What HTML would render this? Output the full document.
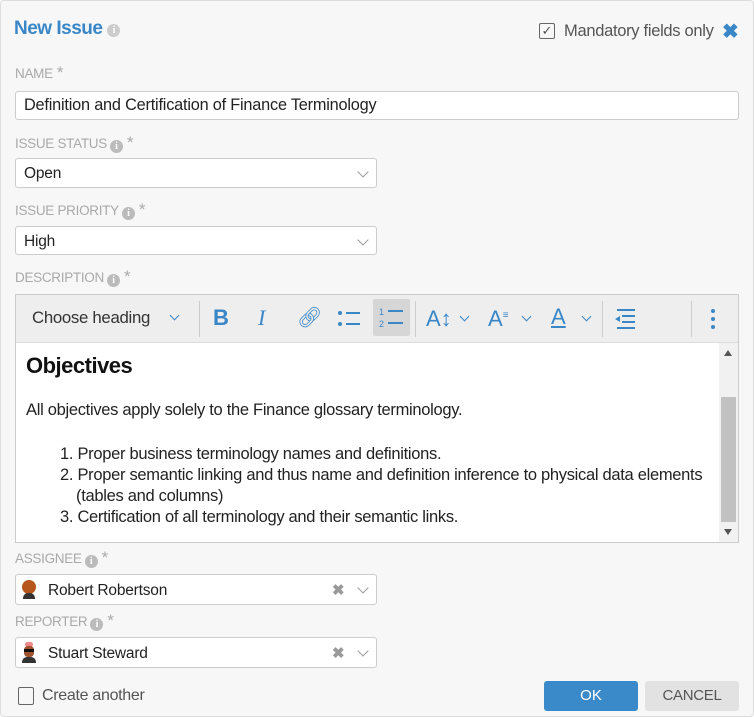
<!DOCTYPE html>
<html><head><meta charset="utf-8"><style>
*{box-sizing:border-box;margin:0;padding:0}
body{width:754px;height:717px;background:#fff;font-family:"Liberation Sans",sans-serif;position:relative;overflow:hidden;color:#222}
.dlg{position:absolute;left:0;top:0;width:754px;height:717px;background:#f7f7f7;box-shadow:inset 0 0 0 1px #ddd;border-radius:4px}
.a{position:absolute}
.lbl{position:absolute;left:15px;font-size:13.5px;color:#a9a9a9;letter-spacing:-0.3px}
.lbl .i{display:inline-block;width:13px;height:13px;border-radius:50%;background:#bbb;color:#fff;font-size:10px;font-weight:bold;text-align:center;line-height:13px;vertical-align:-1px;margin-left:3px;font-family:"Liberation Serif",serif}
.lbl .s{font-size:17px;color:#aaa;margin-left:4px}
.inp{position:absolute;left:15px;background:#fff;border:1px solid #ccc;border-radius:3px;font-size:15.5px;padding-left:8px;letter-spacing:-0.2px}
.chev{position:absolute;right:9px;top:9px;width:8px;height:8px;border-right:1.4px solid #999;border-bottom:1.4px solid #999;transform:rotate(45deg)}
.x{position:absolute;color:#999;font-size:15px;font-weight:bold}
.tb{color:#3a87c8}
.sep{position:absolute;top:6px;width:1px;height:36px;background:#ccc}
</style></head><body>
<div class="dlg">
<div class="a" style="left:14px;top:18px;font-size:19px;font-weight:bold;color:#3a87c8;letter-spacing:-0.5px">New Issue <span style="display:inline-block;width:13px;height:13px;border-radius:50%;background:#ccc;color:#fff;font-size:10px;text-align:center;line-height:13px;vertical-align:1px;font-family:'Liberation Serif',serif">i</span></div>
<div class="a" style="left:539px;top:23px;width:16px;height:16px;border:1.5px solid #666;border-radius:2px;font-size:13px;line-height:13px;text-align:center;color:#555">✓</div>
<div class="a" style="left:564px;top:22px;font-size:16.5px;color:#555;letter-spacing:-0.3px">Mandatory fields only</div>
<div class="a" style="left:722px;top:19px;font-size:20px;font-weight:bold;color:#3a87c8">✖</div>

<div class="lbl" style="top:63px">NAME<span class="s">*</span></div>
<div class="inp" style="top:91px;width:724px;height:29px;line-height:27px;font-size:16.3px">Definition and Certification of Finance Terminology</div>

<div class="lbl" style="top:133px">ISSUE STATUS<span class="i">i</span><span class="s">*</span></div>
<div class="inp" style="top:158px;width:362px;height:30px;line-height:30px">Open<div class="chev"></div></div>

<div class="lbl" style="top:200px">ISSUE PRIORITY<span class="i">i</span><span class="s">*</span></div>
<div class="inp" style="top:226px;width:362px;height:29px;line-height:29px">High<div class="chev"></div></div>

<div class="lbl" style="top:267px">DESCRIPTION<span class="i">i</span><span class="s">*</span></div>
<div class="a" style="left:15px;top:294px;width:724px;height:249px;border:1px solid #ccc;background:#fff">
 <div class="a" style="left:0;top:0;width:722px;height:48px;background:#eee;border-bottom:1px solid #ddd">
  <div class="a" style="left:16px;top:13px;font-size:16.8px;color:#333;letter-spacing:-0.3px">Choose heading</div>
  <div class="a" style="left:155px;top:17px;width:7px;height:7px;border-right:1.5px solid #3a87c8;border-bottom:1.5px solid #3a87c8;transform:rotate(45deg)"></div>
  <div class="sep" style="left:183px"></div>
  <div class="a tb" style="left:197px;top:10px;font-size:22px;font-weight:bold">B</div>
  <div class="a tb" style="left:242px;top:10px;font-size:22px;font-style:italic;font-family:'Liberation Serif',serif">I</div>
  <div class="a tb" style="left:281px;top:10px;font-size:20px">🔗︎</div>
  <svg class="a" style="left:320px;top:12px" width="26" height="24"><circle cx="4" cy="6" r="2" fill="#3a87c8"/><circle cx="4" cy="17" r="2" fill="#3a87c8"/><rect x="10" y="5" width="14" height="2" fill="#3a87c8"/><rect x="10" y="16" width="14" height="2" fill="#3a87c8"/></svg>
  <div class="a" style="left:357px;top:4px;width:37px;height:37px;background:#d6d6d6;border-radius:2px"></div>
  <svg class="a" style="left:362px;top:10px" width="28" height="26"><text x="1" y="10" font-size="9" fill="#3a87c8" font-family="Liberation Sans">1</text><text x="1" y="22" font-size="9" fill="#3a87c8" font-family="Liberation Sans">2</text><rect x="10" y="5" width="15" height="2" fill="#3a87c8"/><rect x="10" y="17" width="15" height="2" fill="#3a87c8"/></svg>
  <div class="sep" style="left:399px"></div>
  <div class="a tb" style="left:410px;top:11px;font-size:22px">A↕</div>
  <div class="a" style="left:445px;top:18px;width:7px;height:7px;border-right:1.5px solid #3a87c8;border-bottom:1.5px solid #3a87c8;transform:rotate(45deg)"></div>
  <div class="a tb" style="left:472px;top:11px;font-size:22px">A<span style="font-size:10px;vertical-align:8px">≡</span></div>
  <div class="a" style="left:507px;top:18px;width:7px;height:7px;border-right:1.5px solid #3a87c8;border-bottom:1.5px solid #3a87c8;transform:rotate(45deg)"></div>
  <div class="a tb" style="left:535px;top:9px;font-size:22px;text-decoration:underline">A</div>
  <div class="a" style="left:567px;top:18px;width:7px;height:7px;border-right:1.5px solid #3a87c8;border-bottom:1.5px solid #3a87c8;transform:rotate(45deg)"></div>
  <div class="sep" style="left:586px"></div>
  <svg class="a" style="left:598px;top:13px" width="24" height="22"><rect x="3" y="1" width="18" height="2" fill="#3a87c8"/><rect x="8" y="7" width="13" height="2" fill="#3a87c8"/><rect x="8" y="13" width="13" height="2" fill="#3a87c8"/><rect x="3" y="19" width="18" height="2" fill="#3a87c8"/><path d="M6 8 L1 11 L6 14Z" fill="#3a87c8"/></svg>
  <div class="sep" style="left:675px"></div>
  <svg class="a" style="left:694px;top:13px" width="6" height="22"><circle cx="3" cy="3" r="2" fill="#3a87c8"/><circle cx="3" cy="11" r="2" fill="#3a87c8"/><circle cx="3" cy="19" r="2" fill="#3a87c8"/></svg>
 </div>
 <div class="a" style="left:703px;top:48px;width:19px;height:199px;background:#f1f1f1">
  <div class="a" style="left:5px;top:7px;border-left:4px solid transparent;border-right:4px solid transparent;border-bottom:6px solid #555"></div>
  <div class="a" style="left:2px;top:54px;width:15px;height:125px;background:#c1c1c1"></div>
  <div class="a" style="left:5px;top:186px;border-left:4px solid transparent;border-right:4px solid transparent;border-top:6px solid #555"></div>
 </div>
 <div class="a" style="left:10px;top:58px;font-size:22px;font-weight:bold;color:#111;letter-spacing:-0.5px">Objectives</div>
 <div class="a" style="left:10px;top:106px;font-size:16.5px;letter-spacing:-0.3px;white-space:nowrap">All objectives apply solely to the Finance glossary terminology.</div>
 <div class="a" style="left:44px;top:149px;font-size:16.5px;line-height:21px;letter-spacing:-0.3px;width:680px;white-space:nowrap">
  <div>1. Proper business terminology names and definitions.</div>
  <div>2. Proper semantic linking and thus name and definition inference to physical data elements<br><span style="padding-left:16px">(tables and columns)</span></div>
  <div>3. Certification of all terminology and their semantic links.</div>
 </div>
</div>

<div class="lbl" style="top:548px">ASSIGNEE<span class="i">i</span><span class="s">*</span></div>
<div class="inp" style="top:574px;width:362px;height:31px;line-height:31px;padding-left:32px">Robert Robertson
 <div class="a" style="left:6px;top:5px;width:14px;height:14px;border-radius:50%;background:#b5561c"></div>
 <div class="a" style="left:7px;top:18px;width:12px;height:6px;border-radius:5px 5px 0 0;background:#333"></div>
 <div class="x" style="left:316px;top:0">✖</div><div class="chev"></div></div>

<div class="lbl" style="top:611px">REPORTER<span class="i">i</span><span class="s">*</span></div>
<div class="inp" style="top:637px;width:362px;height:31px;line-height:31px;padding-left:32px">Stuart Steward
 <div class="a" style="left:9px;top:4px;width:8px;height:5px;border-radius:3px;background:#e88"></div>
 <div class="a" style="left:8px;top:8px;width:10px;height:11px;border-radius:4px;background:#a0522d"></div>
 <div class="a" style="left:8px;top:11px;width:10px;height:3px;background:#111"></div>
 <div class="a" style="left:6px;top:19px;width:14px;height:6px;border-radius:5px 5px 0 0;background:#333"></div>
 <div class="x" style="left:316px;top:0">✖</div><div class="chev"></div></div>

<div class="a" style="left:18px;top:687px;width:16px;height:18px;border:1.5px solid #666;border-radius:2px"></div>
<div class="a" style="left:42px;top:687px;font-size:16px;color:#555;letter-spacing:-0.3px">Create another</div>
<div class="a" style="left:544px;top:681px;width:94px;height:30px;background:#3a8ac9;border-radius:3px;color:#fff;font-size:15px;text-align:center;line-height:30px">OK</div>
<div class="a" style="left:645px;top:681px;width:94px;height:30px;background:#e2e2e2;border-radius:3px;color:#555;font-size:15px;text-align:center;line-height:30px;letter-spacing:-0.3px">CANCEL</div>
</div>
</body></html>
